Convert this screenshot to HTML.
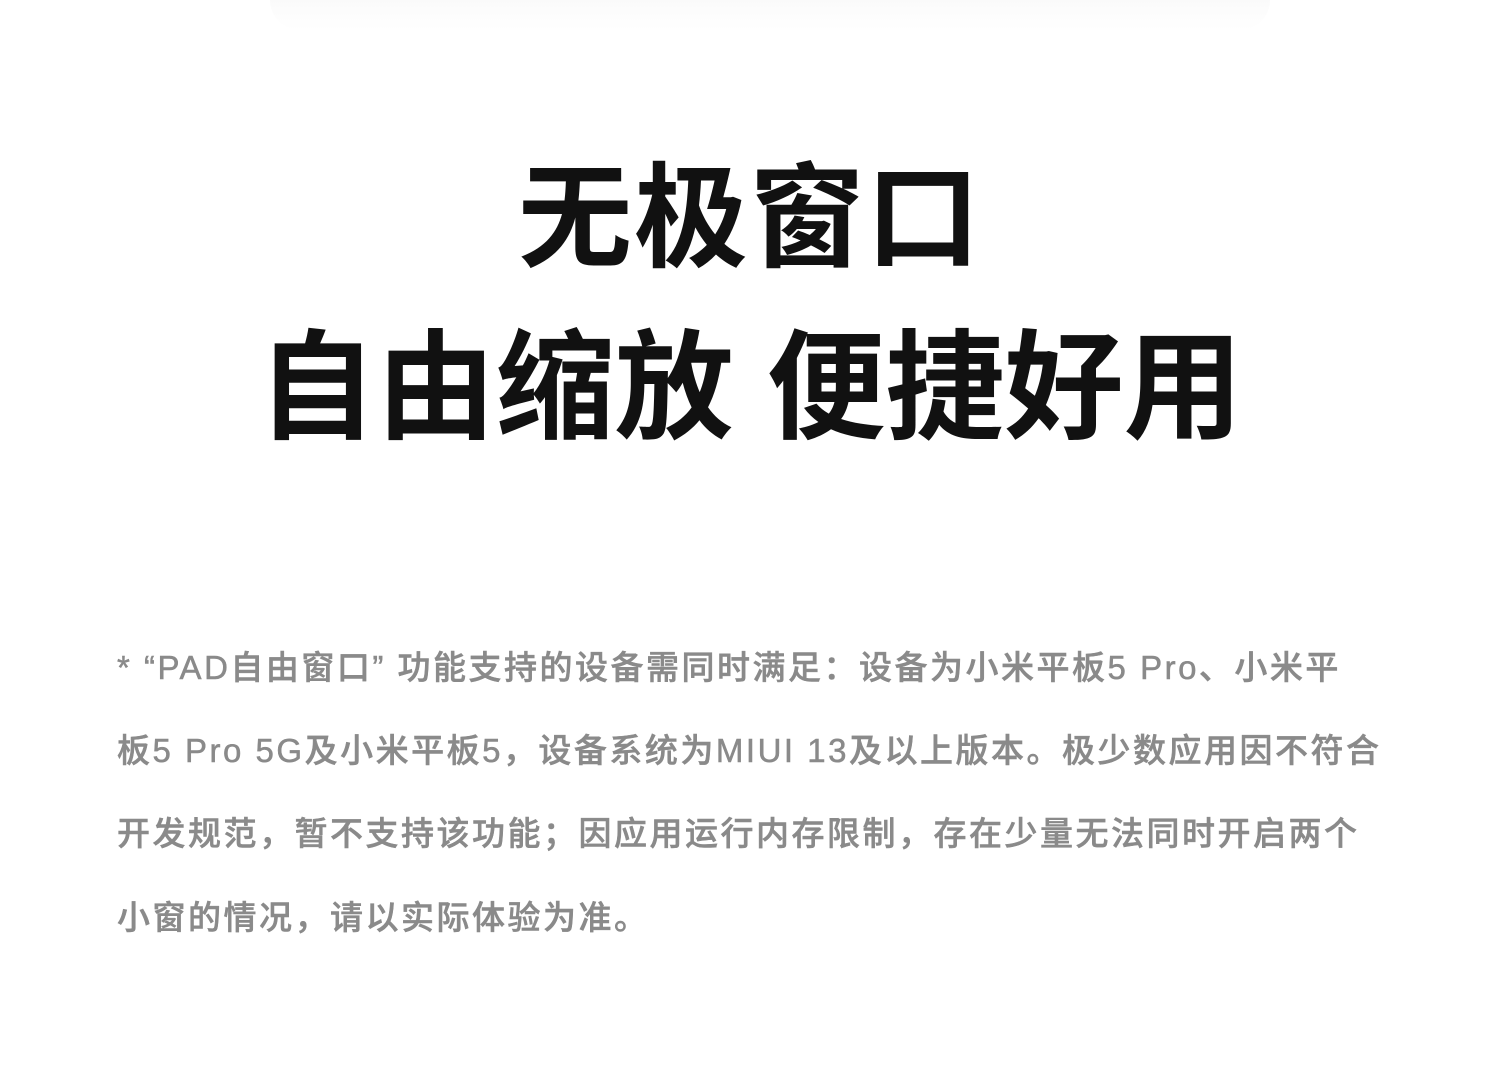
<!DOCTYPE html>
<html><head><meta charset="utf-8"><style>
html,body{margin:0;padding:0;background:#fff;}
body{width:1500px;height:1078px;position:relative;overflow:hidden;font-family:"Liberation Sans","Noto Sans CJK SC",sans-serif;}
.top{position:absolute;left:270px;top:0;width:1000px;height:30px;background:linear-gradient(#f7f7f7,#fff);border-radius:0 0 40px 40px;opacity:.6}
.h{position:absolute;left:0;width:1500px;text-align:center;color:#111;font-weight:bold;line-height:1;white-space:nowrap;}
.p{position:absolute;left:117px;color:#8a8a8a;font-size:33px;font-weight:500;white-space:nowrap;line-height:1;letter-spacing:2.5px;-webkit-text-stroke:0.5px #8a8a8a;}
</style></head><body>
<div class="top"></div>
<div class="h" style="top:163px;font-size:114px;letter-spacing:2px">无极窗口</div>
<div class="h" style="top:329px;font-size:119px;">自由缩放 便捷好用</div>
<div class="p" style="top:651px">* “PAD自由窗口” 功能支持的设备需同时满足：设备为小米平板5 Pro、小米平</div>
<div class="p" style="top:734px">板5 Pro 5G及小米平板5，设备系统为MIUI 13及以上版本。极少数应用因不符合</div>
<div class="p" style="top:817px">开发规范，暂不支持该功能；因应用运行内存限制，存在少量无法同时开启两个</div>
<div class="p" style="top:901px">小窗的情况，请以实际体验为准。</div>
</body></html>
